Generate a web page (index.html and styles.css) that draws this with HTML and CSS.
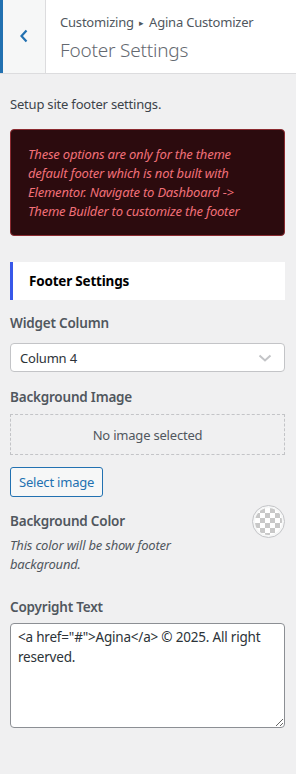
FILE: index.html
```html
<!DOCTYPE html>
<html>
<head>
<meta charset="utf-8">
<link rel="stylesheet" href="styles.css">
</head>
<body>
<div class="header">
  <button class="back" aria-label="Back">
    <svg width="12" height="16" viewBox="0 0 12 16"><path d="M8.5 2.5 L3.5 8 L8.5 13.5" fill="none" stroke="#2271b1" stroke-width="2.2"/></svg>
  </button>
  <div class="title-wrap">
    <div class="crumb">Customizing <span class="arrow">▸</span> Agina Customizer</div>
    <div class="title">Footer Settings</div>
  </div>
</div>
<div class="panel">
  <p class="intro">Setup site footer settings.</p>
  <div class="notice">These options are only for the theme default footer which is not built with Elementor. Navigate to Dashboard -&gt; Theme Builder to customize the footer</div>
  <div class="section-head">Footer Settings</div>
  <div class="control">
    <div class="label">Widget Column</div>
    <div class="select">
      <span>Column 4</span>
      <svg width="14" height="10" viewBox="0 0 14 10"><path d="M1.5 2.5 L7 7.5 L12.5 2.5" fill="none" stroke="#c3c4c7" stroke-width="2"/></svg>
    </div>
  </div>
  <div class="control">
    <div class="label">Background Image</div>
    <div class="placeholder">No image selected</div>
    <button class="btn">Select image</button>
  </div>
  <div class="control color-control">
    <div class="color-text">
      <div class="label">Background Color</div>
      <div class="desc">This color will be show footer background.</div>
    </div>
    <div class="swatch"><div class="checker"></div></div>
  </div>
  <div class="control copy">
    <div class="label">Copyright Text</div>
    <textarea class="textarea">&lt;a href="#"&gt;Agina&lt;/a&gt; © 2025. All right reserved.</textarea>
  </div>
</div>
</body>
</html>
```
FILE: styles.css
```css
* { box-sizing: border-box; }
html, body { margin: 0; padding: 0; }
body {
  background: #f0f0f1;
  font-family: "Noto Sans", "Open Sans", sans-serif;
  font-size: 13px;
  letter-spacing: -0.2px;
  color: #3c434a;
  width: 296px;
  height: 774px;
  overflow: hidden;
}
.header {
  display: flex;
  height: 74px;
  background: #fff;
  border-bottom: 1px solid #dcdcde;
}
.back {
  width: 46px;
  height: 73px;
  flex: none;
  border: 0;
  border-left: 3px solid #2271b1;
  border-right: 1px solid #dcdcde;
  background: #f6f7f7;
  display: flex;
  align-items: center;
  justify-content: center;
  padding: 0 0 2px 0;
}
.title-wrap {
  padding: 12px 0 0 14px;
}
.crumb {
  font-size: 13px;
  color: #50575e;
  line-height: 20px;
}
.arrow { font-size: 9px; position: relative; top: -1px; margin: 0 2px; }
.title {
  font-size: 19px;
  font-weight: 300;
  color: #646970;
  line-height: 28px;
  margin-top: 2px;
}
.panel {
  padding: 0 11px 0 10px;
}
.intro {
  margin: 20px 0 0;
  line-height: 20px;
  color: #3c434a;
}
.notice {
  margin-top: 15px;
  background: #2c0b0e;
  border: 1px solid #8a2a30;
  border-radius: 4px;
  padding: 15px 12px 14px 17px;
  color: #f27079;
  font-style: italic;
  line-height: 19px;
}
.section-head {
  margin-top: 26px;
  background: #fff;
  border-left: 3px solid #3858e9;
  height: 38px;
  display: flex;
  align-items: center;
  padding-left: 16px;
  font-weight: 700;
  font-size: 13.5px;
  color: #000;
}
.control { margin-top: 13px; }
.label {
  font-size: 13.5px;
  font-weight: 600;
  color: #50575e;
  line-height: 20px;
  margin-bottom: 10px;
}
.select {
  height: 29px;
  background: #fff;
  border: 1px solid #c3c4c7;
  border-radius: 4px;
  display: flex;
  align-items: center;
  justify-content: space-between;
  padding: 0 12px 0 9px;
  color: #2c3338;
}
.control + .control { margin-top: 15px; }
.placeholder {
  height: 41px;
  border: 1px dashed #c3c4c7;
  display: flex;
  align-items: center;
  justify-content: center;
  color: #50575e;
  margin-top: -3px;
}
.btn {
  margin-top: 12px;
  height: 30px;
  padding: 0 8px;
  border: 1px solid #2271b1;
  border-radius: 3px;
  background: #f6f7f7;
  color: #2271b1;
  font-family: inherit;
  font-size: 13px;
  letter-spacing: -0.2px;
}
.color-control {
  display: flex;
  justify-content: space-between;
  align-items: flex-start;
}
.control.color-control { margin-top: 14px; }
.color-text .label { margin-bottom: 5px; }
.desc {
  font-style: italic;
  color: #50575e;
  line-height: 19px;
  width: 180px;
}
.swatch {
  width: 33px;
  height: 33px;
  border-radius: 50%;
  border: 1px solid #c3c4c7;
  background: #f6f7f7;
  display: flex;
  align-items: center;
  justify-content: center;
  margin-top: -6px;
}
.checker {
  width: 27px;
  height: 27px;
  border-radius: 50%;
  background-color: #fff;
  background-image:
    linear-gradient(45deg, #c8c8c8 25%, transparent 25%, transparent 75%, #c8c8c8 75%),
    linear-gradient(45deg, #c8c8c8 25%, transparent 25%, transparent 75%, #c8c8c8 75%);
  background-size: 10px 10px;
  background-position: 0 0, 5px 5px;
}
.control.copy { margin-top: 23px; }
.textarea {
  display: block;
  width: 100%;
  height: 105px;
  border: 1px solid #8c8f94;
  border-radius: 4px;
  padding: 3px 7px;
  font-family: inherit;
  font-size: 13.5px;
  letter-spacing: -0.2px;
  line-height: 20px;
  color: #2c3338;
  resize: vertical;
  margin-top: -4px;
}
```
